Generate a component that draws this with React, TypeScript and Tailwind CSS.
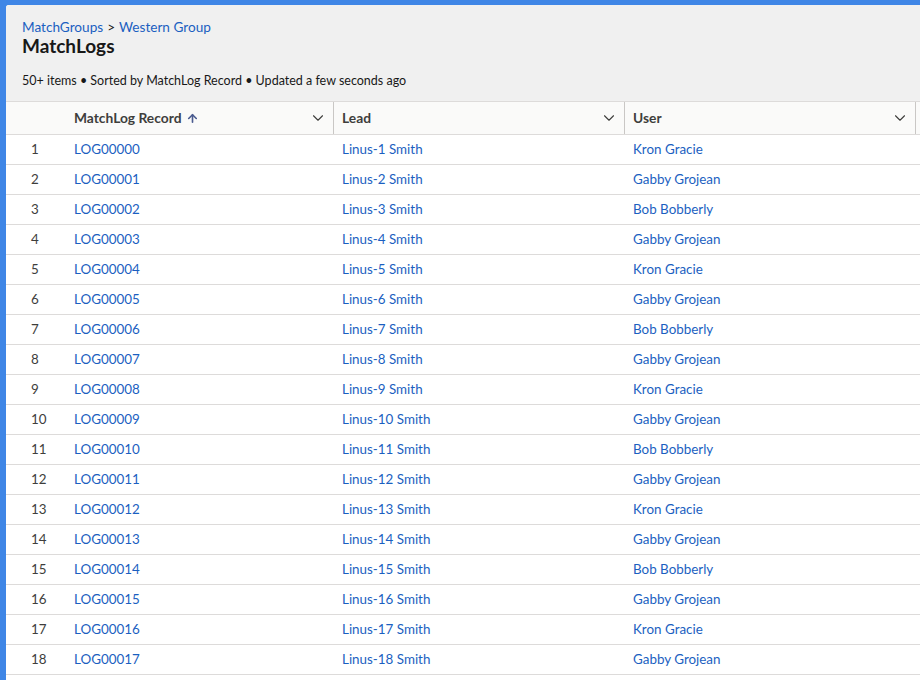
import { ChevronDown, ArrowUp } from 'lucide-react'

const USERS = ['Kron Gracie', 'Gabby Grojean', 'Bob Bobberly', 'Gabby Grojean']

const rows = Array.from({ length: 18 }, (_, i) => ({
  n: i + 1,
  record: `LOG${String(i).padStart(5, '0')}`,
  lead: `Linus-${i + 1} Smith`,
  user: USERS[i % 4],
}))

const COLS = 'grid grid-cols-[60px_268px_291px_291px_1fr]'

export default function App() {
  return (
    <div
      className="w-[920px] h-[680px] overflow-hidden bg-[#3f86e6] pl-[6px] pt-[5px] text-[13.4px] text-[#181818]"
      style={{ fontFamily: 'Lato, "Open Sans", "Liberation Sans", sans-serif' }}
    >
      <div className="h-full bg-white rounded-tl-[3px] overflow-hidden">
        {/* header */}
        <div className="bg-[#f0f0f0] h-[96px] px-4 pt-[15px]">
          <div className="flex items-center gap-1 leading-[15px] text-[13.6px] text-[#1b5fc1]">
            <span>MatchGroups</span>
            <span className="text-[#181818]">&gt;</span>
            <span>Western Group</span>
          </div>
          <h1 className="text-[19px] font-bold leading-[22px]">MatchLogs</h1>
          <div className="text-[12.5px] mt-[16px] leading-[16px] text-[#181818]">
            50+ items • Sorted by MatchLog Record • Updated a few seconds ago
          </div>
        </div>

        {/* table header */}
        <div className={`${COLS} h-[34px] bg-[#fafaf9] border-y border-[#dddbda] font-bold text-[13.8px] text-[#3e3e3c]`}>
          <div />
          <div className="flex items-center justify-between pl-2 pr-[6px] border-r border-[#c9c7c5]">
            <span className="flex items-center gap-[5px]">
              MatchLog Record
              <ArrowUp className="w-[13px] h-[13px] text-[#4a5b8f]" strokeWidth={3} />
            </span>
            <ChevronDown className="w-[18px] h-[18px] text-[#3e3e3c]" strokeWidth={1.5} />
          </div>
          <div className="flex items-center justify-between pl-2 pr-[6px] border-r border-[#c9c7c5]">
            <span>Lead</span>
            <ChevronDown className="w-[18px] h-[18px] text-[#3e3e3c]" strokeWidth={1.5} />
          </div>
          <div className="flex items-center justify-between pl-2 pr-[6px] border-r border-[#c9c7c5]">
            <span>User</span>
            <ChevronDown className="w-[18px] h-[18px] text-[#3e3e3c]" strokeWidth={1.5} />
          </div>
          <div />
        </div>

        {/* rows */}
        {rows.map(r => (
          <div key={r.n} className={`${COLS} h-[30px] border-b border-[#dddbda] items-center`}>
            <div className="pl-[25px] text-[#3e3e3c]">{r.n}</div>
            <div className="pl-2 text-[#1b5fc1]">{r.record}</div>
            <div className="pl-2 text-[#1b5fc1]">{r.lead}</div>
            <div className="pl-2 text-[#1b5fc1]">{r.user}</div>
            <div />
          </div>
        ))}
      </div>
    </div>
  )
}
